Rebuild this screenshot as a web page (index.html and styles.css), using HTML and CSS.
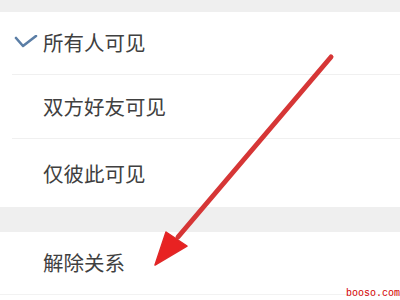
FILE: index.html
```html
<!DOCTYPE html>
<html lang="zh">
<head>
<meta charset="utf-8">
<link rel="stylesheet" href="styles.css">
</head>
<body>
<div class="screen">
  <div class="band band-top"></div>
  <div class="group">
    <div class="row">
      <span class="slot">
        <svg class="check" width="24" height="14" viewBox="0 0 24 14"><path d="M2 3 L9 11 L22 1" fill="none" stroke="#5b7ea6" stroke-width="2.6" stroke-linecap="round" stroke-linejoin="round"/></svg>
      </span>
      <span class="label">所有人可见</span>
    </div>
    <div class="row">
      <span class="slot"></span>
      <span class="label">双方好友可见</span>
    </div>
    <div class="row last">
      <span class="slot"></span>
      <span class="label">仅彼此可见</span>
    </div>
  </div>
  <div class="band band-mid"></div>
  <div class="group">
    <div class="row row-end">
      <span class="slot"></span>
      <span class="label">解除关系</span>
    </div>
  </div>
  <svg class="arrow" width="400" height="300" viewBox="0 0 400 300">
    <line x1="331" y1="57" x2="178" y2="237" stroke="#d63636" stroke-width="5" stroke-linecap="round"/>
    <polygon points="155,265 166,232 187,246" fill="#e82222" stroke="#e02828" stroke-width="1.5" stroke-linejoin="round"/>
  </svg>
  <div class="watermark">booso.com</div>
</div>
</body>
</html>
```

FILE: styles.css
```css
html, body {
  margin: 0;
  padding: 0;
  background: #ffffff;
}
.screen {
  position: relative;
  width: 400px;
  height: 300px;
  overflow: hidden;
  background: #ffffff;
  font-family: "Noto Sans CJK SC", "Noto Sans", sans-serif;
}
.band {
  background: #efefef;
}
.band-top {
  height: 12px;
}
.band-mid {
  height: 25px;
}
.group {
  background: #ffffff;
}
.row {
  height: 64px;
  margin-left: 12px;
  display: flex;
  align-items: center;
  border-bottom: 1px solid #f0f0f0;
  box-sizing: border-box;
}
.row:first-child {
  height: 63px;
  padding-bottom: 2px;
}
.row.last {
  border-bottom: none;
  height: 68px;
}
.row-end {
  height: 64px;
  margin-left: 0;
  padding-left: 12px;
  border-bottom: 1px solid #f2f2f2;
}
.slot {
  width: 31px;
  display: flex;
  align-items: center;
}
.check {
  display: block;
  margin-left: 2px;
}
.label {
  font-size: 20.5px;
  font-weight: 400;
  color: #404040;
  line-height: 1;
}
.arrow {
  position: absolute;
  left: 0;
  top: 0;
}
.watermark {
  position: absolute;
  right: 0;
  bottom: 0;
  font-family: "Liberation Mono", monospace;
  font-size: 10px;
  line-height: 12px;
  color: #d40000;
}
```
